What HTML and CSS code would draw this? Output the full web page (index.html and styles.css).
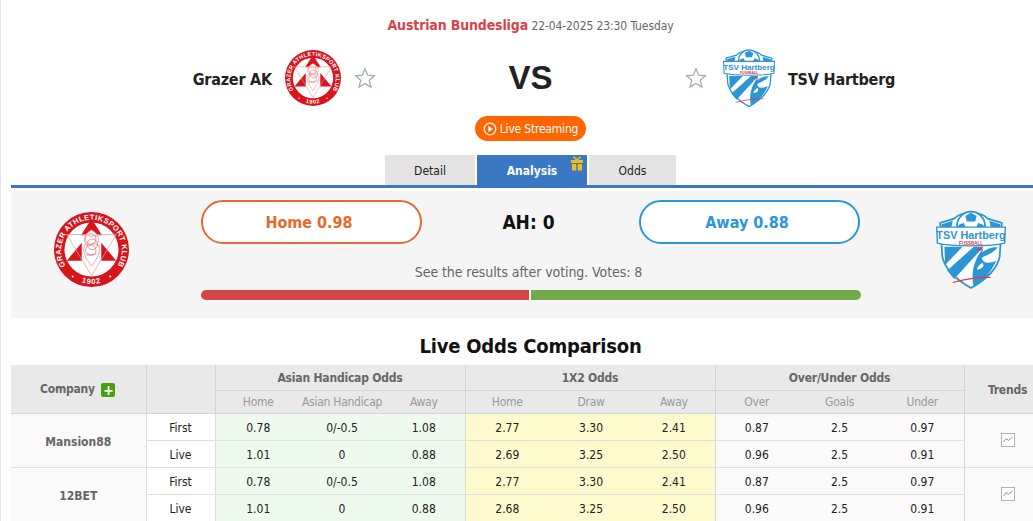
FILE: index.html
```html
<!DOCTYPE html>
<html lang="en">
<head>
    <meta charset="UTF-8">
    <meta name="viewport" content="width=device-width, initial-scale=1.0">
    <title>Grazer AK vs TSV Hartberg</title>
    <link rel="stylesheet" href="styles.css">
</head>
<body>
    <svg class="defs" width="0" height="0">
        <defs>
            <symbol id="logo-grazer" viewBox="0 0 100 100">
                <circle cx="50" cy="50" r="50" fill="#d8141c"/>
                <circle cx="50" cy="50" r="36" fill="#fff"/>
                <path id="grazer-arc" d="M19 77A40.500 40.500 0 1 1 81 77" fill="none"/>
                <path id="grazer-year" d="M30.600 91.700A46 46 0 0 0 69.400 91.700" fill="none"/>
                <text class="logo-ring"><textPath href="#grazer-arc" startOffset="50%" text-anchor="middle">GRAZER ATHLETIKSPORT KLUB</textPath></text>
                <text class="logo-year"><textPath href="#grazer-year" startOffset="50%" text-anchor="middle">1902</textPath></text>
                <circle cx="25" cy="86" r="1.300" fill="#fff"/>
                <circle cx="75" cy="86" r="1.300" fill="#fff"/>
                <path d="M50 9L64 31H36Z M37 41V65H17Z M63 41V65H83Z" fill="#d8141c"/>
                <path d="M17 30H83L50 85Z" fill="none" stroke="#eb9a9a" stroke-width="1"/>
                <path d="M50 24C58 28 62 36 58 42C64 50 58 62 50 72C42 62 36 50 42 42C38 36 42 28 50 24Z" fill="#fff" stroke="#e98d90" stroke-width="1"/>
                <circle cx="49" cy="36" r="7" fill="none" stroke="#e4777b" stroke-width="1"/>
                <circle cx="51" cy="43" r="7" fill="none" stroke="#e4777b" stroke-width="1"/>
                <circle cx="49" cy="51" r="7" fill="none" stroke="#e4777b" stroke-width="1"/>
                <path d="M42 43C48 47 54 38 59 45M43 58C48 54 54 60 57 54M46 31C50 35 55 28 57 33" fill="none" stroke="#e4777b"/>
            </symbol>
            <symbol id="logo-hartberg" viewBox="0 0 100 112">
                <path d="M6 18L26 12C36 1 64 1 74 12L94 18L91 66C87 86 66 102 50 111C34 102 13 86 9 66Z" fill="#fff" stroke="#2b95d6" stroke-width="2.500"/>
                <path d="M8 20L24 15L22 24H8Z M92 20L76 15L78 24H92Z" fill="#2b95d6"/>
                <circle cx="50" cy="22" r="20" fill="#fff" stroke="#2b95d6" stroke-width="2.500"/>
                <path d="M42 8L50 3L58 8L56 16H44Z M34 20L40 18L42 24H30Z M66 20L60 18L58 24H70Z" fill="#2b95d6"/>
                <path d="M12 52H38L13 78Z M54 52H68L26 98L16 86Z" fill="#2b95d6"/>
                <path d="M54 110C50 94 52 72 68 54C62 70 66 80 86 72C78 90 66 102 54 110Z" fill="#2b95d6"/>
                <path d="M64 62C70 56 80 52 88 53C82 60 74 64 64 68Z" fill="#2b95d6"/>
                <path d="M66 75C72 80 62 86 58 84C60 80 62 78 66 75Z" fill="#fff"/>
                <path d="M24 103C44 98 64 95 78 96" fill="none" stroke="#ee3338" stroke-width="1.500"/>
                <path d="M58 57L66 52V57Z" fill="#ee3338"/>
                <path d="M1 24H99L98 47C80 52 20 52 2 47Z" fill="#fff" stroke="#2b95d6" stroke-width="2"/>
                <text class="logo-name" x="50" y="41" text-anchor="middle">TSV Hartberg</text>
                <text class="logo-sub" x="50" y="49" text-anchor="middle">FUSSBALL</text>
            </symbol>
            <symbol id="icon-star" viewBox="0 0 22 22">
                <path d="M11 1.800L13.700 8.200L20.500 8.800L15.300 13.300L16.900 20.100L11 16.500L5.100 20.100L6.700 13.300L1.500 8.800L8.300 8.200Z" fill="#fff" stroke="#a3aab3" stroke-width="1.300"/>
            </symbol>
            <symbol id="icon-trend" viewBox="0 0 14 14">
                <rect x="0.500" y="0.500" width="13" height="13" fill="#fff" stroke="#aab4bf"/>
                <path d="M2.500 9L5 5.500L7.500 7.500L11.500 4" fill="none" stroke="#8b97a3"/>
            </symbol>
        </defs>
    </svg>

    <div class="page">
        <div class="league">
            <span class="league-name">Austrian Bundesliga</span>
            <span class="league-time">22-04-2025 23:30 Tuesday</span>
        </div>

        <div class="teams">
            <div class="team team-home">
                <span class="team-name">Grazer AK</span>
                <svg class="team-logo"><use href="#logo-grazer"/></svg>
                <svg class="star"><use href="#icon-star"/></svg>
            </div>
            <div class="vs">VS</div>
            <div class="team team-away">
                <svg class="star"><use href="#icon-star"/></svg>
                <svg class="team-logo"><use href="#logo-hartberg"/></svg>
                <span class="team-name">TSV Hartberg</span>
            </div>
        </div>

        <div class="stream-row">
            <a class="stream-btn">
                <svg class="play" viewBox="0 0 14 14"><circle cx="7" cy="7" r="5.800" fill="none" stroke="#fff" stroke-width="1.300"/><path d="M5.300 3.900L10 7L5.300 10.100Z" fill="#fff"/></svg>
                Live Streaming
            </a>
        </div>

        <div class="tabs">
            <a class="tab tab-detail">Detail</a>
            <a class="tab tab-analysis">Analysis
                <svg class="gift" viewBox="0 0 14 15"><path d="M1 4H13V7H1Z M2 8H6.300V14.500H2Z M7.700 8H12V14.500H7.700Z" fill="#f4bc1a"/><path d="M7 4L3.500 .8M7 4L10.500 .8" stroke="#f4bc1a" stroke-width="1.600" fill="none"/></svg>
            </a>
            <a class="tab tab-odds">Odds</a>
        </div>

        <div class="vote">
            <svg class="vote-logo vote-logo-home"><use href="#logo-grazer"/></svg>
            <div class="vote-main">
                <div class="vote-btns">
                    <a class="vote-btn vote-home">Home 0.98</a>
                    <span class="vote-ah">AH: 0</span>
                    <a class="vote-btn vote-away">Away 0.88</a>
                </div>
                <p class="vote-note">See the results after voting. Votes: 8</p>
                <div class="vote-bar">
                    <span class="bar-home"></span>
                    <span class="bar-away"></span>
                </div>
            </div>
            <svg class="vote-logo vote-logo-away"><use href="#logo-hartberg"/></svg>
        </div>

        <h2 class="odds-title">Live Odds Comparison</h2>

        <table class="odds">
            <colgroup>
                <col class="c-company"><col class="c-type">
                <col class="c-1"><col class="c-2"><col class="c-3">
                <col class="c-4"><col class="c-5"><col class="c-6">
                <col class="c-7"><col class="c-8"><col class="c-9">
                <col class="c-trend">
            </colgroup>
            <thead>
                <tr class="group-row">
                    <th class="th-company" rowspan="2">Company <span class="plus">+</span></th>
                    <th rowspan="2"></th>
                    <th colspan="3">Asian Handicap Odds</th>
                    <th colspan="3">1X2 Odds</th>
                    <th colspan="3">Over/Under Odds</th>
                    <th class="th-trend" rowspan="2">Trends</th>
                </tr>
                <tr class="sub-row">
                    <td>Home</td><td>Asian Handicap</td><td class="end">Away</td>
                    <td>Home</td><td>Draw</td><td class="end">Away</td>
                    <td>Over</td><td>Goals</td><td class="end">Under</td>
                </tr>
            </thead>
            <tbody>
                <tr class="first">
                    <td class="company" rowspan="2">Mansion88</td>
                    <td class="type">First</td>
                    <td class="ah">0.78</td><td class="ah">0/-0.5</td><td class="ah end">1.08</td>
                    <td class="x12">2.77</td><td class="x12">3.30</td><td class="x12 end">2.41</td>
                    <td class="ou">0.87</td><td class="ou">2.5</td><td class="ou end">0.97</td>
                    <td class="trend" rowspan="2"><svg class="trend-icon"><use href="#icon-trend"/></svg></td>
                </tr>
                <tr class="live">
                    <td class="type">Live</td>
                    <td class="ah">1.01</td><td class="ah">0</td><td class="ah end">0.88</td>
                    <td class="x12">2.69</td><td class="x12">3.25</td><td class="x12 end">2.50</td>
                    <td class="ou">0.96</td><td class="ou">2.5</td><td class="ou end">0.91</td>
                </tr>
                <tr class="first">
                    <td class="company" rowspan="2">12BET</td>
                    <td class="type">First</td>
                    <td class="ah">0.78</td><td class="ah">0/-0.5</td><td class="ah end">1.08</td>
                    <td class="x12">2.77</td><td class="x12">3.30</td><td class="x12 end">2.41</td>
                    <td class="ou">0.87</td><td class="ou">2.5</td><td class="ou end">0.97</td>
                    <td class="trend" rowspan="2"><svg class="trend-icon"><use href="#icon-trend"/></svg></td>
                </tr>
                <tr class="live">
                    <td class="type">Live</td>
                    <td class="ah">1.01</td><td class="ah">0</td><td class="ah end">0.88</td>
                    <td class="x12">2.68</td><td class="x12">3.25</td><td class="x12 end">2.50</td>
                    <td class="ou">0.96</td><td class="ou">2.5</td><td class="ou end">0.91</td>
                </tr>
            </tbody>
        </table>
    </div>
</body>
</html>
```

FILE: styles.css
```css
html, body {
    height: 100%;
    margin: 0;
    overflow: hidden;
    background: #fff;
}
body {
    font-family: "DejaVu Sans Condensed", "Noto Sans", sans-serif;
    font-size: 12px;
    color: #222;
    border-left: 1px solid #e6e6e6;
}
.defs {
    display: block;
    height: 0;
}
.page {
    width: 1039px;
    margin-left: 10px;
}

/* header */
.league {
    height: 18px;
    padding-top: 16px;
    text-align: center;
    line-height: 18px;
}
.league-name {
    color: #d8424a;
    font-size: 14px;
    font-weight: 700;
    letter-spacing: -0.15px;
}
.league-time {
    color: #666;
    font-size: 12px;
    letter-spacing: -0.1px;
}
.teams {
    display: grid;
    grid-template-columns: 1fr 309px 1fr;
    height: 60px;
    margin-top: 14px;
}
.team {
    display: flex;
    align-items: center;
}
.team-home {
    justify-content: flex-end;
}
.team-name {
    padding-top: 2px;
    color: #222;
    font-size: 16px;
    font-weight: 700;
    letter-spacing: -0.2px;
}
.team-logo {
    width: 56px;
    height: 56px;
}
.team-home .team-logo {
    margin: 0 13px;
}
.team-away .team-logo {
    width: 52px;
    height: 60px;
    margin: 0 13px 0 16px;
}
.star {
    width: 22px;
    height: 22px;
}
.vs {
    color: #222;
    font-family: "Liberation Sans", sans-serif;
    font-size: 33px;
    font-weight: 700;
    line-height: 60px;
    text-align: center;
}
.stream-row {
    display: flex;
    justify-content: center;
    margin-top: 8px;
}
.stream-btn {
    display: flex;
    align-items: center;
    justify-content: center;
    gap: 3px;
    box-sizing: border-box;
    width: 111px;
    height: 25px;
    border-radius: 13px;
    background: #ff6600;
    color: #fff;
    font-size: 12px;
    letter-spacing: -0.2px;
}
.play {
    width: 14px;
    height: 14px;
}

/* tabs */
.tabs {
    display: flex;
    justify-content: center;
    gap: 2px;
    margin-top: 14px;
    border-bottom: 3px solid #3a78c4;
}
.tab {
    position: relative;
    height: 30px;
    background: #e3e3e3;
    color: #222;
    font-size: 12px;
    line-height: 32px;
    text-align: center;
}
.tab-detail {
    width: 90px;
}
.tab-analysis {
    width: 110px;
    background: #3a78c4;
    color: #fff;
    font-weight: 700;
}
.tab-odds {
    width: 87px;
}
.gift {
    position: absolute;
    top: 1px;
    right: 3px;
    width: 14px;
    height: 15px;
}

/* vote panel */
.vote {
    display: flex;
    align-items: flex-start;
    width: 1040px;
    height: 127px;
    margin-top: 3px;
    background: #f5f5f5;
}
.vote-logo {
    flex: none;
}
.vote-logo-home {
    width: 75px;
    height: 75px;
    margin: 21px 72px 0 43px;
}
.vote-logo-away {
    width: 70px;
    height: 79px;
    margin: 19px 0 0 75px;
}
.vote-main {
    flex: none;
    width: 660px;
    padding-top: 9px;
}
.vote-btns {
    display: flex;
    justify-content: space-between;
    align-items: center;
}
.vote-btn {
    box-sizing: border-box;
    width: 221px;
    height: 44px;
    padding-right: 5px;
    border: 2px solid;
    border-radius: 22px;
    background: #fff;
    font-size: 16px;
    font-weight: 700;
    line-height: 42px;
    text-align: center;
}
.vote-home {
    border-color: #e46a2e;
    color: #e46a2e;
}
.vote-away {
    margin-right: 1px;
    border-color: #2b95e0;
    color: #2b95e0;
}
.vote-ah {
    margin-right: 4px;
    color: #111;
    font-size: 19px;
    font-weight: 700;
}
.vote-note {
    margin: 18px 0 0;
    padding-right: 5px;
    color: #666;
    font-size: 14px;
    letter-spacing: -0.08px;
    line-height: 20px;
    text-align: center;
}
.vote-bar {
    display: flex;
    gap: 2px;
    height: 10px;
    margin-top: 8px;
}
.bar-home {
    width: 328px;
    border-radius: 5px 0 0 5px;
    background: #d64545;
}
.bar-away {
    flex: 1;
    border-radius: 0 5px 5px 0;
    background: #72aa4a;
}

/* odds table */
.odds-title {
    margin: 14px 0 5px;
    color: #111;
    font-size: 20px;
    font-weight: 700;
    letter-spacing: -0.2px;
    line-height: 28px;
    text-align: center;
}
.odds {
    width: 1040px;
    table-layout: fixed;
    border-collapse: collapse;
}
.c-company { width: 135px; }
.c-type { width: 69px; }
.c-1 { width: 86px; }
.c-2 { width: 82px; }
.c-3 { width: 82px; }
.c-4 { width: 84px; }
.c-5 { width: 84px; }
.c-6 { width: 82px; }
.c-7 { width: 83px; }
.c-8 { width: 83px; }
.c-9 { width: 83px; }
.c-trend { width: 87px; }
.odds th {
    background: #e9e9e9;
    border-right: 1px solid #d5d5d5;
    border-bottom: 1px solid #d5d5d5;
    color: #666;
    font-size: 12px;
    font-weight: 700;
    letter-spacing: -0.2px;
    padding: 0;
}
.group-row th {
    height: 25px;
}
.odds .th-company {
    padding: 1px 1px 0 0;
}
.odds .th-trend {
    padding-top: 1px;
    text-align: center;
}
.sub-row td {
    height: 22px;
    padding: 0;
    background: #e9e9e9;
    border-bottom: 1px solid #d5d5d5;
    color: #999;
    font-size: 12px;
    letter-spacing: -0.25px;
    text-align: center;
    white-space: nowrap;
}
.sub-row .end {
    border-right: 1px solid #d5d5d5;
}
.plus {
    display: inline-block;
    width: 14px;
    height: 14px;
    margin-left: 3px;
    border-radius: 2px;
    background: #4a9e12;
    color: #fff;
    font-size: 14px;
    font-weight: 700;
    line-height: 14px;
    text-align: center;
    vertical-align: -2px;
}
.odds tbody td {
    height: 25px;
    padding: 1px 0 0;
    border-bottom: 1px solid #e0e0e0;
    color: #222;
    font-size: 12px;
    text-align: center;
}
.odds tbody .end {
    border-right: 1px solid #d8d8d8;
}
.odds tbody .company {
    padding-top: 2px;
    background: #f9f9f9;
    border-right: 1px solid #dcdcdc;
    color: #666;
    font-weight: 700;
}
.odds tbody .type {
    background: #fff;
    border-right: 1px solid #dcdcdc;
}
.odds tbody .ah {
    background: #eefaee;
}
.odds tbody .x12 {
    background: #fdfbcd;
}
.odds tbody .ou {
    background: #fafafa;
}
.odds tbody .trend {
    background: #fafafa;
    border-right: 1px solid #dcdcdc;
}
.trend-icon {
    display: block;
    width: 14px;
    height: 14px;
    margin: -2px auto 0;
}

/* text inside the logos */
.logo-ring {
    fill: #fff;
    font-family: "Liberation Sans", sans-serif;
    font-size: 10px;
    font-weight: 700;
    letter-spacing: 0.500px;
}
.logo-year {
    fill: #fff;
    font-family: "Liberation Sans", sans-serif;
    font-size: 10px;
    font-weight: 700;
    letter-spacing: 1.200px;
}
.logo-name {
    fill: #2b95d6;
    font-family: "Liberation Sans", sans-serif;
    font-size: 15.500px;
    font-weight: 700;
}
.logo-sub {
    fill: #ee3338;
    font-family: "Liberation Sans", sans-serif;
    font-size: 6.500px;
    font-weight: 700;
}
```
